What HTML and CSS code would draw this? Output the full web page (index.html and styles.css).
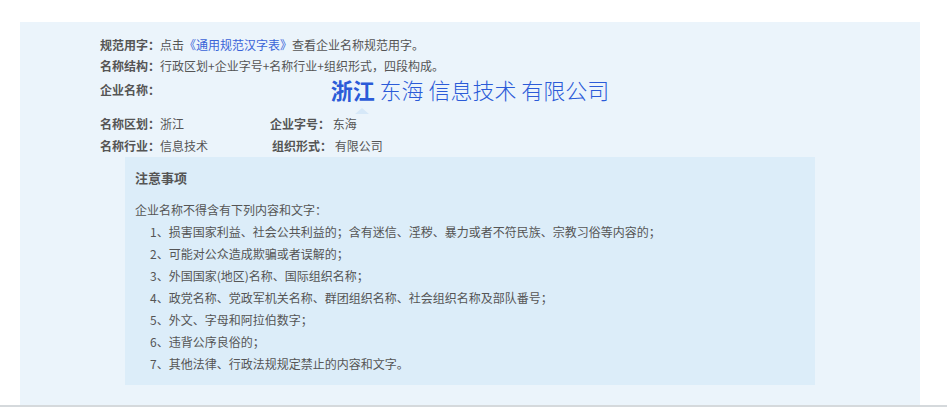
FILE: index.html
```html
<!DOCTYPE html>
<html lang="zh-CN">
<head>
    <meta charset="UTF-8">
    <title>企业名称规范</title>
    <link rel="stylesheet" href="styles.css">
</head>
<body>
    <div class="page">
        <div class="panel">
            <div class="line"><b>规范用字：</b>点击<a href="#">《通用规范汉字表》</a>查看企业名称规范用字。</div>
            <div class="line"><b>名称结构：</b>行政区划+企业字号+名称行业+组织形式，四段构成。</div>
            <div class="name-row">
                <b class="name-label">企业名称：</b>
                <div class="name"><span class="region">浙江</span> 东海 信息技术 有限公司</div>
                <div></div>
            </div>
            <div class="parts">
                <div><b>名称区划：</b>浙江</div>
                <div><b>企业字号：</b> 东海</div>
                <div><b>名称行业：</b>信息技术</div>
                <div class="shift"><b>组织形式：</b> 有限公司</div>
            </div>
            <div class="notice">
                <h4>注意事项</h4>
                <p>企业名称不得含有下列内容和文字：</p>
                <ol>
                    <li>1、损害国家利益、社会公共利益的；含有迷信、淫秽、暴力或者不符民族、宗教习俗等内容的；</li>
                    <li>2、可能对公众造成欺骗或者误解的；</li>
                    <li>3、外国国家(地区)名称、国际组织名称；</li>
                    <li>4、政党名称、党政军机关名称、群团组织名称、社会组织名称及部队番号；</li>
                    <li>5、外文、字母和阿拉伯数字；</li>
                    <li>6、违背公序良俗的；</li>
                    <li>7、其他法律、行政法规规定禁止的内容和文字。</li>
                </ol>
            </div>
        </div>
    </div>
</body>
</html>
```
FILE: styles.css
```css
body {
    margin: 0;
    background: #fff;
    font-family: "Noto Sans CJK SC", "Noto Sans", sans-serif;
    font-size: 12px;
    color: #555;
}
.page {
    padding-top: 22px;
    border-bottom: 2px solid #d5d9dc;
}
.panel {
    margin-left: 20px;
    width: 900px;
    box-sizing: border-box;
    padding: 12px 0 20px;
    background: #ebf4fb;
}
b {
    color: #555;
    font-weight: bold;
}
.line {
    padding-left: 80px;
    line-height: 21px;
    height: 21px;
}
.line a {
    color: #3a63d8;
    text-decoration: none;
}
.name-row {
    display: grid;
    grid-template-columns: 1fr auto 1fr;
    align-items: center;
    height: 26px;
    margin-bottom: 11px;
}
.name-label {
    padding-left: 80px;
}
.name {
    font-size: 22px;
    line-height: 26px;
    font-weight: 300;
    color: #2b5bd8;
}
.region {
    position: relative;
    font-weight: bold;
}
.region::after {
    content: "";
    position: absolute;
    left: 24px;
    bottom: -9px;
    border-left: 7px solid transparent;
    border-right: 7px solid transparent;
    border-bottom: 6px solid #d6e8f8;
}
.parts {
    display: grid;
    grid-template-columns: 170px auto;
    padding-left: 80px;
    line-height: 22px;
}
.shift {
    padding-left: 2px;
}
.notice {
    margin-left: 105px;
    width: 690px;
    box-sizing: border-box;
    padding: 10px 10px 10px;
    background: #dcedf9;
}
.notice h4 {
    margin: 0 0 10px;
    font-size: 13px;
    line-height: 22px;
    color: #555;
}
.notice p {
    margin: 0;
    line-height: 22px;
}
.notice ol {
    margin: 0;
    padding-left: 15px;
    list-style: none;
}
.notice li {
    line-height: 22px;
}
```
